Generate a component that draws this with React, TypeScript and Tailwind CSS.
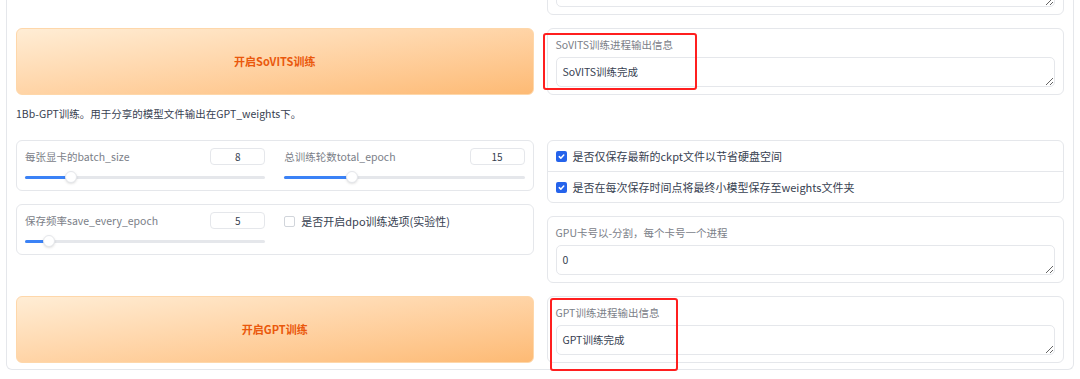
import React from "react";

const font = "font-['Noto_Sans_CJK_SC',sans-serif]";

function OutputBox({ label, value }: { label: string; value: string }) {
  return (
    <div className="rounded-[6px] border border-[#e5e7eb] bg-white px-[8px] pt-[9px] pb-[7px]">
      <div className="h-[13px] text-[10.5px] leading-[13px] text-[#7b8088]">{label}</div>
      <textarea
        readOnly
        value={value}
        className="mt-[6px] block h-[30px] w-full resize-y rounded-[5px] border border-[#e5e7eb] px-[6px] py-[7px] text-[10.5px] leading-[14px] text-[#374151] outline-none"
      />
    </div>
  );
}

function TrainButton({ text }: { text: string }) {
  return (
    <button className="h-full w-full rounded-[6px] border border-[#fed7aa] bg-gradient-to-br from-[#ffedd5] to-[#fdba74] text-[11px] font-bold text-[#ea580c]">
      {text}
    </button>
  );
}

function Slider({ label, value, pct }: { label: string; value: number; pct: number }) {
  return (
    <div className="flex-1">
      <div className="flex items-center justify-between">
        <span className="text-[10.5px] leading-[13px] text-[#7b8088]">{label}</span>
        <div className="flex h-[17px] w-[55px] items-center justify-center rounded-[4px] border border-[#e5e7eb] text-[10px] text-[#374151]">
          {value}
        </div>
      </div>
      <div className="relative mt-[6px] h-[12px]">
        <div className="absolute inset-x-0 top-[5px] h-[3px] rounded-full bg-[#e5e7eb]" />
        <div
          className="absolute left-0 top-[5px] h-[3px] rounded-full bg-[#3b82f6]"
          style={{ width: `${pct}%` }}
        />
        <div
          className="absolute top-0 size-[12px] -translate-x-1/2 rounded-full border border-[#e5e7eb] bg-white shadow-sm"
          style={{ left: `${pct}%` }}
        />
      </div>
    </div>
  );
}

function Check({ checked, label }: { checked: boolean; label: string }) {
  return (
    <div className="flex items-center gap-[6px]">
      {checked ? (
        <span className="flex size-[11px] items-center justify-center rounded-[2px] bg-[#2563eb]">
          <svg viewBox="0 0 12 12" className="size-[9px]" fill="none" stroke="white" strokeWidth="2" strokeLinecap="round" strokeLinejoin="round">
            <path d="M3 6.2 5.1 8.2 9 4" />
          </svg>
        </span>
      ) : (
        <span className="size-[11px] rounded-[2px] border border-[#d1d5db] bg-white" />
      )}
      <span className="text-[11px] leading-[14px] text-[#374151]">{label}</span>
    </div>
  );
}

export default function App() {
  return (
    <div className={`min-h-screen overflow-hidden bg-white ${font}`}>
      <div className="mx-[6px] rounded-b-[6px] border-x border-b border-[#e5e7eb] px-[9px] pb-[6px]">
        <div className="-mt-[52px] flex gap-[13px]">
          <div className="flex-1" />
          <div className="flex-1">
            <OutputBox label="" value="" />
          </div>
        </div>

        <div className="mt-[13px] flex gap-[13px]">
          <div className="flex-1">
            <TrainButton text="开启SoVITS训练" />
          </div>
          <div className="relative flex-1">
            <OutputBox label="SoVITS训练进程输出信息" value="SoVITS训练完成" />
            <div className="absolute left-[-4px] top-[5px] h-[57px] w-[154px] rounded-[3px] border-[2.5px] border-[#ff1f1f]" />
          </div>
        </div>

        <p className="mt-[12px] text-[10.5px] leading-[14px] text-[#374151]">
          1Bb-GPT训练。用于分享的模型文件输出在GPT_weights下。
        </p>

        <div className="mt-[19px] flex gap-[13px]">
          <div className="flex flex-1 flex-col gap-[13px]">
            <div className="flex gap-[19px] rounded-[6px] border border-[#e5e7eb] px-[8px] pt-[7px] pb-[7px]">
              <Slider label="每张显卡的batch_size" value={8} pct={19} />
              <Slider label="总训练轮数total_epoch" value={15} pct={28} />
            </div>
            <div className="flex gap-[19px] rounded-[6px] border border-[#e5e7eb] px-[8px] pt-[7px] pb-[7px]">
              <Slider label="保存频率save_every_epoch" value={5} pct={10} />
              <div className="flex-1 pt-[2px]">
                <Check checked={false} label="是否开启dpo训练选项(实验性)" />
              </div>
            </div>
          </div>
          <div className="flex flex-1 flex-col gap-[13px]">
            <div className="rounded-[6px] border border-[#e5e7eb] bg-white">
              <div className="flex h-[30px] items-center px-[8px]">
                <Check checked label="是否仅保存最新的ckpt文件以节省硬盘空间" />
              </div>
              <div className="flex h-[31px] items-center border-t border-[#e5e7eb] px-[8px]">
                <Check checked label="是否在每次保存时间点将最终小模型保存至weights文件夹" />
              </div>
            </div>
            <OutputBox label="GPU卡号以-分割，每个卡号一个进程" value="0" />
          </div>
        </div>

        <div className="mt-[13px] flex gap-[13px]">
          <div className="flex-1">
            <TrainButton text="开启GPT训练" />
          </div>
          <div className="relative flex-1">
            <OutputBox label="GPT训练进程输出信息" value="GPT训练完成" />
            <div className="absolute left-[3px] top-[2px] h-[73px] w-[128px] rounded-[3px] border-[2.5px] border-[#ff1f1f]" />
          </div>
        </div>
      </div>
    </div>
  );
}
